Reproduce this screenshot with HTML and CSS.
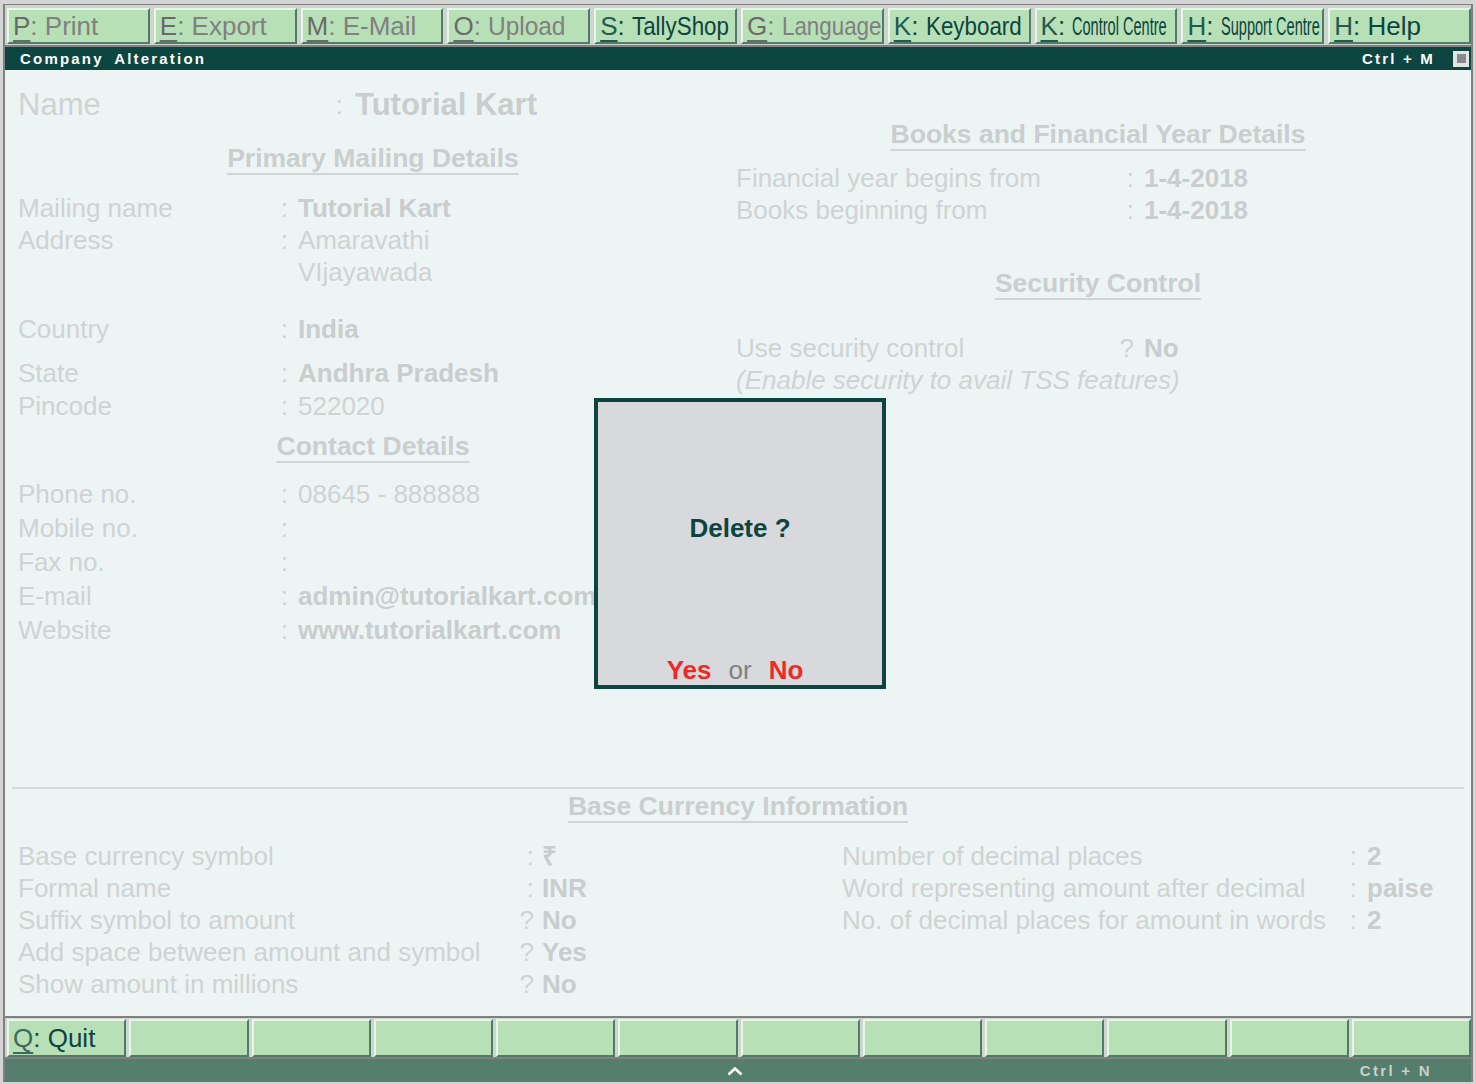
FILE: index.html
```html
<!DOCTYPE html>
<html>
<head>
<meta charset="utf-8">
<title>Company Alteration</title>
<link rel="stylesheet" href="styles.css">
</head>
<body>
<div class="window">
  <div class="toolbar">
    <div class="tbtn off"><span class="key">P</span>: Print</div>
    <div class="tbtn off"><span class="key">E</span>: Export</div>
    <div class="tbtn off"><span class="key">M</span>: E-Mail</div>
    <div class="tbtn off"><span class="key">O</span>: <span class="sq94">Upload</span></div>
    <div class="tbtn on"><span class="key">S</span>: <span class="sq86">TallyShop</span></div>
    <div class="tbtn off"><span class="key">G</span>: <span class="sq86">Language</span></div>
    <div class="tbtn on"><span class="key">K</span>: <span class="sq86">Keyboard</span></div>
    <div class="tbtn on"><span class="key">K</span>: <span class="sq56">Control Centre</span></div>
    <div class="tbtn on"><span class="key">H</span>: <span class="sq56">Support Centre</span></div>
    <div class="tbtn on"><span class="key">H</span>: Help</div>
  </div>

  <div class="titlebar">
    <span class="ttl">Company Alteration</span>
    <span class="tright">Ctrl + M</span>
    <span class="winbtn"><span class="winbtn-in"></span></span>
  </div>

  <div class="content">
    <div class="upper">
      <div class="col-left">
        <div class="row name-row"><span class="lbl">Name</span><span class="sep">:</span><span class="val b">Tutorial Kart</span></div>
        <div class="head mt17"><span>Primary Mailing Details</span></div>
        <div class="row mt18"><span class="lbl">Mailing name</span><span class="sep">:</span><span class="val b">Tutorial Kart</span></div>
        <div class="row"><span class="lbl">Address</span><span class="sep">:</span><span class="val">Amaravathi</span></div>
        <div class="row"><span class="lbl"></span><span class="sep"></span><span class="val">VIjayawada</span></div>
        <div class="row mt25"><span class="lbl">Country</span><span class="sep">:</span><span class="val b">India</span></div>
        <div class="row mt12"><span class="lbl">State</span><span class="sep">:</span><span class="val b">Andhra Pradesh</span></div>
        <div class="row mt1"><span class="lbl">Pincode</span><span class="sep">:</span><span class="val">522020</span></div>
        <div class="head mt8"><span>Contact Details</span></div>
        <div class="row row34 mt15"><span class="lbl">Phone no.</span><span class="sep">:</span><span class="val">08645 - 888888</span></div>
        <div class="row row34"><span class="lbl">Mobile no.</span><span class="sep">:</span><span class="val"></span></div>
        <div class="row row34"><span class="lbl">Fax no.</span><span class="sep">:</span><span class="val"></span></div>
        <div class="row row34"><span class="lbl">E-mail</span><span class="sep">:</span><span class="val b">admin@tutorialkart.com</span></div>
        <div class="row row34"><span class="lbl">Website</span><span class="sep">:</span><span class="val b">www.tutorialkart.com</span></div>
      </div>

      <div class="col-right">
        <div class="head"><span>Books and Financial Year Details</span></div>
        <div class="row mt12"><span class="lbl">Financial year begins from</span><span class="sep">:</span><span class="val b">1-4-2018</span></div>
        <div class="row"><span class="lbl">Books beginning from</span><span class="sep">:</span><span class="val b">1-4-2018</span></div>
        <div class="head mt41"><span>Security Control</span></div>
        <div class="row mt33"><span class="lbl">Use security control</span><span class="sep">?</span><span class="val b">No</span></div>
        <div class="note">(Enable security to avail TSS features)</div>
      </div>
    </div>

    <div class="lower">
      <div class="rule"></div>
      <div class="head"><span>Base Currency Information</span></div>
      <div class="lower-grid">
        <div class="lcol">
          <div class="row"><span class="lbl">Base currency symbol</span><span class="sep">:</span><span class="val b">₹</span></div>
          <div class="row"><span class="lbl">Formal name</span><span class="sep">:</span><span class="val b">INR</span></div>
          <div class="row"><span class="lbl">Suffix symbol to amount</span><span class="sep">?</span><span class="val b">No</span></div>
          <div class="row"><span class="lbl">Add space between amount and symbol</span><span class="sep">?</span><span class="val b">Yes</span></div>
          <div class="row"><span class="lbl">Show amount in millions</span><span class="sep">?</span><span class="val b">No</span></div>
        </div>
        <div class="rcol">
          <div class="row"><span class="lbl">Number of decimal places</span><span class="sep">:</span><span class="val b">2</span></div>
          <div class="row"><span class="lbl">Word representing amount after decimal</span><span class="sep">:</span><span class="val b">paise</span></div>
          <div class="row"><span class="lbl">No. of decimal places for amount in words</span><span class="sep">:</span><span class="val b">2</span></div>
        </div>
      </div>
    </div>

    <div class="dialog">
      <div class="dlg-q">Delete ?</div>
      <div class="dlg-a"><span>Yes</span><span class="dlg-or">or</span><span>No</span></div>
    </div>
  </div>

  <div class="buttonbar">
    <div class="bbtn"><span class="key">Q</span>: Quit</div>
    <div class="bbtn"></div>
    <div class="bbtn"></div>
    <div class="bbtn"></div>
    <div class="bbtn"></div>
    <div class="bbtn"></div>
    <div class="bbtn"></div>
    <div class="bbtn"></div>
    <div class="bbtn"></div>
    <div class="bbtn"></div>
    <div class="bbtn"></div>
    <div class="bbtn"></div>
  </div>

  <div class="statusbar">
    <span class="sb-left"></span>
    <span class="sb-mid">
      <svg width="16" height="10" viewBox="0 0 16 10"><polyline points="1.5,8.5 8,2.5 14.5,8.5" fill="none" stroke="#ffffff" stroke-width="2.6"/></svg>
    </span>
    <span class="sb-right">Ctrl + N</span>
  </div>
</div>
</body>
</html>
```

FILE: styles.css
```css
* { box-sizing: border-box; }
html, body { margin: 0; padding: 0; }
body {
  background: #d4d4d4;
  font-family: "Liberation Sans", Arial, sans-serif;
  width: 1476px;
  height: 1084px;
  overflow: hidden;
}

.window {
  margin: 4px 3px 0;
  border-left: 2px solid #808080;
  border-right: 2px solid #808080;
  border-top: 1px solid #808080;
  display: flex;
  flex-direction: column;
}

/* top toolbar */
.toolbar {
  display: flex;
  gap: 4px;
  height: 42px;
  padding: 3px 0 1px 2px;
  background: #ccd6cc;
  border-bottom: 2px solid #808080;
}
.tbtn {
  flex: 1;
  min-width: 0;
  height: 36px;
  background: #b7e0b6;
  border: 2px solid;
  border-color: #eaf5ea #4e7b6a #4e7b6a #eaf5ea;
  font-size: 26px;
  line-height: 32px;
  padding-left: 4px;
  white-space: nowrap;
}
.tbtn.off { color: #808080; }
.tbtn.off .key { color: #6a6a6a; }
.tbtn.on { color: #0d4440; }
.tbtn.on .key { color: #235a50; }
.key {
  text-decoration-line: underline;
  text-decoration-style: solid;
  text-decoration-color: currentColor;
  text-decoration-thickness: 2px;
  text-underline-offset: 5px;
  text-decoration-skip-ink: none;
}
.sq94, .sq86, .sq56 {
  display: inline-block;
  transform-origin: left center;
}
.sq94 { transform: scaleX(0.94); }
.sq86 { transform: scaleX(0.86); }
.sq56 { transform: scaleX(0.56); }

/* title bar */
.titlebar {
  height: 23px;
  background: #0d4541;
  color: #ffffff;
  font-weight: bold;
  font-size: 15px;
  line-height: 23px;
  letter-spacing: 2.2px;
  display: flex;
  align-items: center;
  padding: 0 2px 0 15px;
}
.ttl { flex: 1; word-spacing: 4.6px; }
.tright { margin-right: 18px; }
.winbtn {
  width: 16px;
  height: 16px;
  background: #e2e5e2;
  display: flex;
  align-items: center;
  justify-content: center;
}
.winbtn-in { width: 9px; height: 9px; background: #8a8a8a; }

/* content */
.content {
  height: 946px;
  background: #edf5f4;
  position: relative;
  display: flex;
  flex-direction: column;
  color: #ced3d3;
  font-size: 26px;
}
.upper {
  display: grid;
  grid-template-columns: 710px 724px;
  column-gap: 8px;
  padding-left: 13px;
}
.col-left { padding-top: 15px; --lw: 250px; --vp: 10px; }
.col-right { padding-top: 48px; --lw: 378px; --vp: 10px; }

.row {
  display: grid;
  grid-template-columns: var(--lw) 20px 1fr;
  height: 32px;
  line-height: 32px;
  white-space: nowrap;
}
.row34 { height: 34px; line-height: 34px; }
.sep { text-align: right; }
.val { padding-left: var(--vp); }
.b { font-weight: bold; color: #c8cdcd; }

.name-row {
  --lw: 305px;
  --vp: 12px;
  height: 40px;
  line-height: 40px;
  font-size: 31px;
}
.name-row .sep { font-size: 26px; }

.head {
  text-align: center;
  height: 32px;
  line-height: 32px;
  font-weight: bold;
  font-size: 26.5px;
  color: #c9cece;
  white-space: nowrap;
}
.head span {
  text-decoration: underline;
  text-decoration-thickness: 2px;
  text-underline-offset: 6px;
  text-decoration-color: #d0d4d4;
}
.note {
  font-style: italic;
  height: 32px;
  line-height: 32px;
  white-space: nowrap;
}

.mt1 { margin-top: 1px; }
.mt8 { margin-top: 8px; }
.mt12 { margin-top: 12px; }
.mt15 { margin-top: 15px; }
.mt17 { margin-top: 17px; }
.mt18 { margin-top: 18px; }
.mt25 { margin-top: 25px; }
.mt33 { margin-top: 33px; }
.mt41 { margin-top: 41px; }

/* lower section */
.lower { margin-top: auto; padding-bottom: 16px; }
.rule { height: 2px; background: #d6d9d9; margin: 0 7px 1px; }
.lower-grid {
  display: grid;
  grid-template-columns: 824px 1fr;
  padding-left: 13px;
  margin-top: 18px;
}
.lcol { --lw: 496px; --vp: 8px; }
.rcol { --lw: 495px; --vp: 10px; }

/* dialog */
.dialog {
  position: absolute;
  left: 589px;
  top: 328px;
  width: 292px;
  height: 291px;
  border: 4px solid #0d4440;
  background: #d8d9dc;
  padding-top: 110px;
  text-align: center;
  font-size: 26px;
  font-weight: bold;
  line-height: 32px;
}
.dlg-q { color: #0d4440; }
.dlg-a {
  margin-top: 110px;
  display: flex;
  justify-content: center;
  gap: 17px;
  padding-right: 10px;
  color: #ee2a28;
}
.dlg-or { color: #808080; font-weight: normal; }

/* bottom buttons */
.buttonbar {
  display: flex;
  gap: 3px;
  height: 43px;
  padding: 1px 0 0 2px;
  border-top: 2px solid #808080;
  border-bottom: 2px solid #808080;
  background: #ccd6cc;
}
.bbtn {
  flex: 1;
  min-width: 0;
  height: 38px;
  background: #b7e0b6;
  border: 2px solid;
  border-color: #eaf5ea #4e7b6a #4e7b6a #eaf5ea;
  font-size: 26px;
  line-height: 34px;
  padding-left: 4px;
  color: #0d4440;
  white-space: nowrap;
}
.bbtn .key { color: #3d6a60; }

/* status bar */
.statusbar {
  height: 23px;
  background: #567e6f;
  display: grid;
  grid-template-columns: 1fr auto 1fr;
  align-items: center;
}
.sb-mid { display: flex; padding-right: 6px; }
.sb-right {
  justify-self: end;
  padding-right: 39px;
  color: #c8d0cb;
  font-weight: bold;
  font-size: 15px;
  letter-spacing: 2.3px;
}
```
